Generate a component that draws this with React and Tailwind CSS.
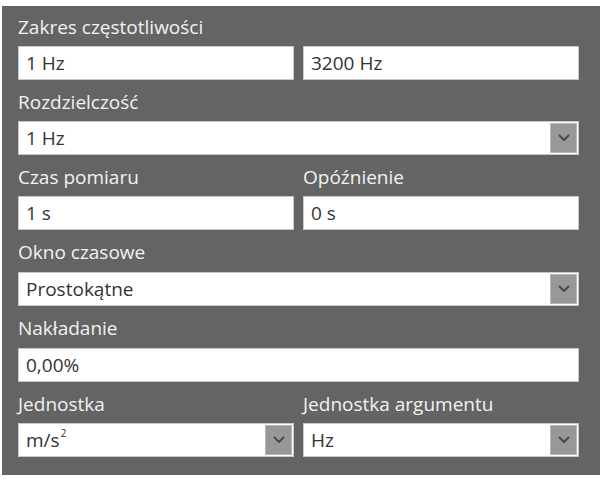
function Label({ children, h = 'h-[41px]' }) {
  return (
    <div className={`${h} flex items-center pt-[3px] text-[19px] leading-none text-[#f2f2f2] whitespace-nowrap`}>
      {children}
    </div>
  );
}

function Field({ value }) {
  return (
    <div className="h-[34px] bg-white border border-[#c8c8c8] flex items-center pl-[7px] text-[19px] leading-none text-[#333]">
      {value}
    </div>
  );
}

function Chevron() {
  return (
    <svg width="12" height="8" viewBox="0 0 12 8" fill="none" stroke="#4a4a4a" strokeWidth="2" strokeLinecap="round" strokeLinejoin="round">
      <path d="M1.5 1.5 6 6 10.5 1.5" />
    </svg>
  );
}

function Select({ value }) {
  return (
    <div className="h-[34px] bg-white border border-[#c8c8c8] flex items-center justify-between pl-[7px] pr-[1px] text-[19px] leading-none text-[#333]">
      <span>{value}</span>
      <div className="w-[27px] h-[30px] bg-[#989898] border border-[#b8b8b8] flex items-center justify-center">
        <Chevron />
      </div>
    </div>
  );
}

export default function App() {
  return (
    <div className="w-[604px] h-[479px] bg-white pt-[6px] pl-[2px]" style={{ fontFamily: '"Open Sans", "Noto Sans", sans-serif' }}>
      <div className="w-[598px] h-[469px] bg-[#646464] pl-[16px] pr-[21px]">
        <Label h="h-[40px]">Zakres częstotliwości</Label>
        <div className="grid grid-cols-2 gap-x-[9px]">
          <Field value="1 Hz" />
          <Field value="3200 Hz" />
        </div>
        <Label>Rozdzielczość</Label>
        <Select value="1 Hz" />
        <div className="grid grid-cols-2 gap-x-[9px]">
          <Label>Czas pomiaru</Label>
          <Label>Opóźnienie</Label>
          <Field value="1 s" />
          <Field value="0 s" />
        </div>
        <Label h="h-[42px]">Okno czasowe</Label>
        <Select value="Prostokątne" />
        <Label h="h-[42px]">Nakładanie</Label>
        <Field value="0,00%" />
        <div className="grid grid-cols-2 gap-x-[9px]">
          <Label>Jednostka</Label>
          <Label>Jednostka argumentu</Label>
          <Select value={<span className="flex items-start">m/s<span className="text-[10px] -mt-[3px] ml-[1px]">2</span></span>} />
          <Select value="Hz" />
        </div>
      </div>
    </div>
  );
}
